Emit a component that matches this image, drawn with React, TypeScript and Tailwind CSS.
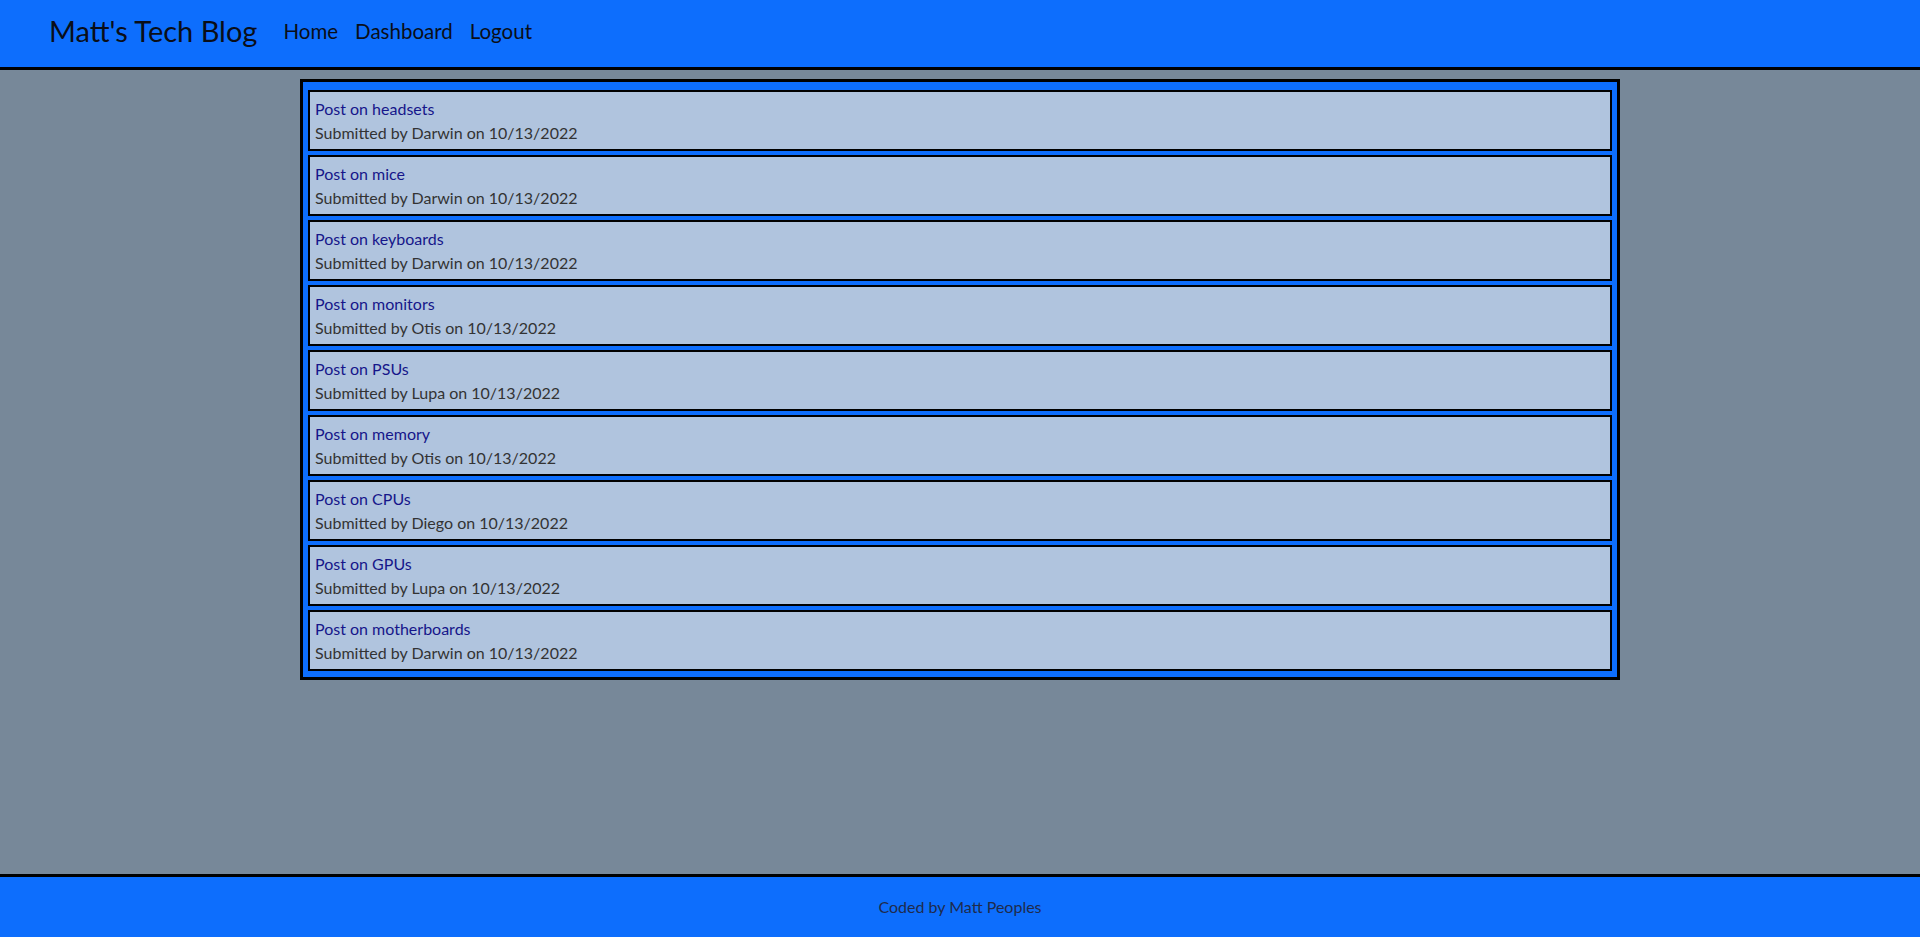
const posts = [
  { title: "Post on headsets", author: "Darwin" },
  { title: "Post on mice", author: "Darwin" },
  { title: "Post on keyboards", author: "Darwin" },
  { title: "Post on monitors", author: "Otis" },
  { title: "Post on PSUs", author: "Lupa" },
  { title: "Post on memory", author: "Otis" },
  { title: "Post on CPUs", author: "Diego" },
  { title: "Post on GPUs", author: "Lupa" },
  { title: "Post on motherboards", author: "Darwin" },
]

export default function App() {
  return (
    <div
      className="min-h-screen flex flex-col bg-[#778899] text-[16px]"
      style={{ fontFamily: 'Lato, "Noto Sans", sans-serif' }}
    >
      <header className="h-[70px] bg-[#0d6efd] border-b-[3px] border-black flex items-center pl-[49px] pb-[7px]">
        <a href="#" className="text-[29px] text-[#0a0e18] mr-[26px] leading-none">
          Matt's Tech Blog
        </a>
        <nav className="flex items-center gap-[17px] text-[20.5px] text-[#0a0e18] pt-[2px]">
          <a href="#">Home</a>
          <a href="#">Dashboard</a>
          <a href="#">Logout</a>
        </nav>
      </header>

      <main className="flex-1">
        <div className="w-[1320px] mx-auto mt-[9px] border-[3px] border-black bg-[#0d6efd] px-[5px] pt-[8px] pb-[6px] flex flex-col gap-[4px]">
          {posts.map((post) => (
            <div
              key={post.title}
              className="h-[61px] border-2 border-black bg-[#b0c4de] px-[5px] pt-[5px] leading-6"
            >
              <a href="#" className="block text-[#16168a]">
                {post.title}
              </a>
              <p className="text-[#333]">Submitted by {post.author} on 10/13/2022</p>
            </div>
          ))}
        </div>
      </main>

      <footer className="h-[63px] bg-[#0d6efd] border-t-[3px] border-black flex items-center justify-center text-[#1f2b4c]">
        Coded by Matt Peoples
      </footer>
    </div>
  )
}
